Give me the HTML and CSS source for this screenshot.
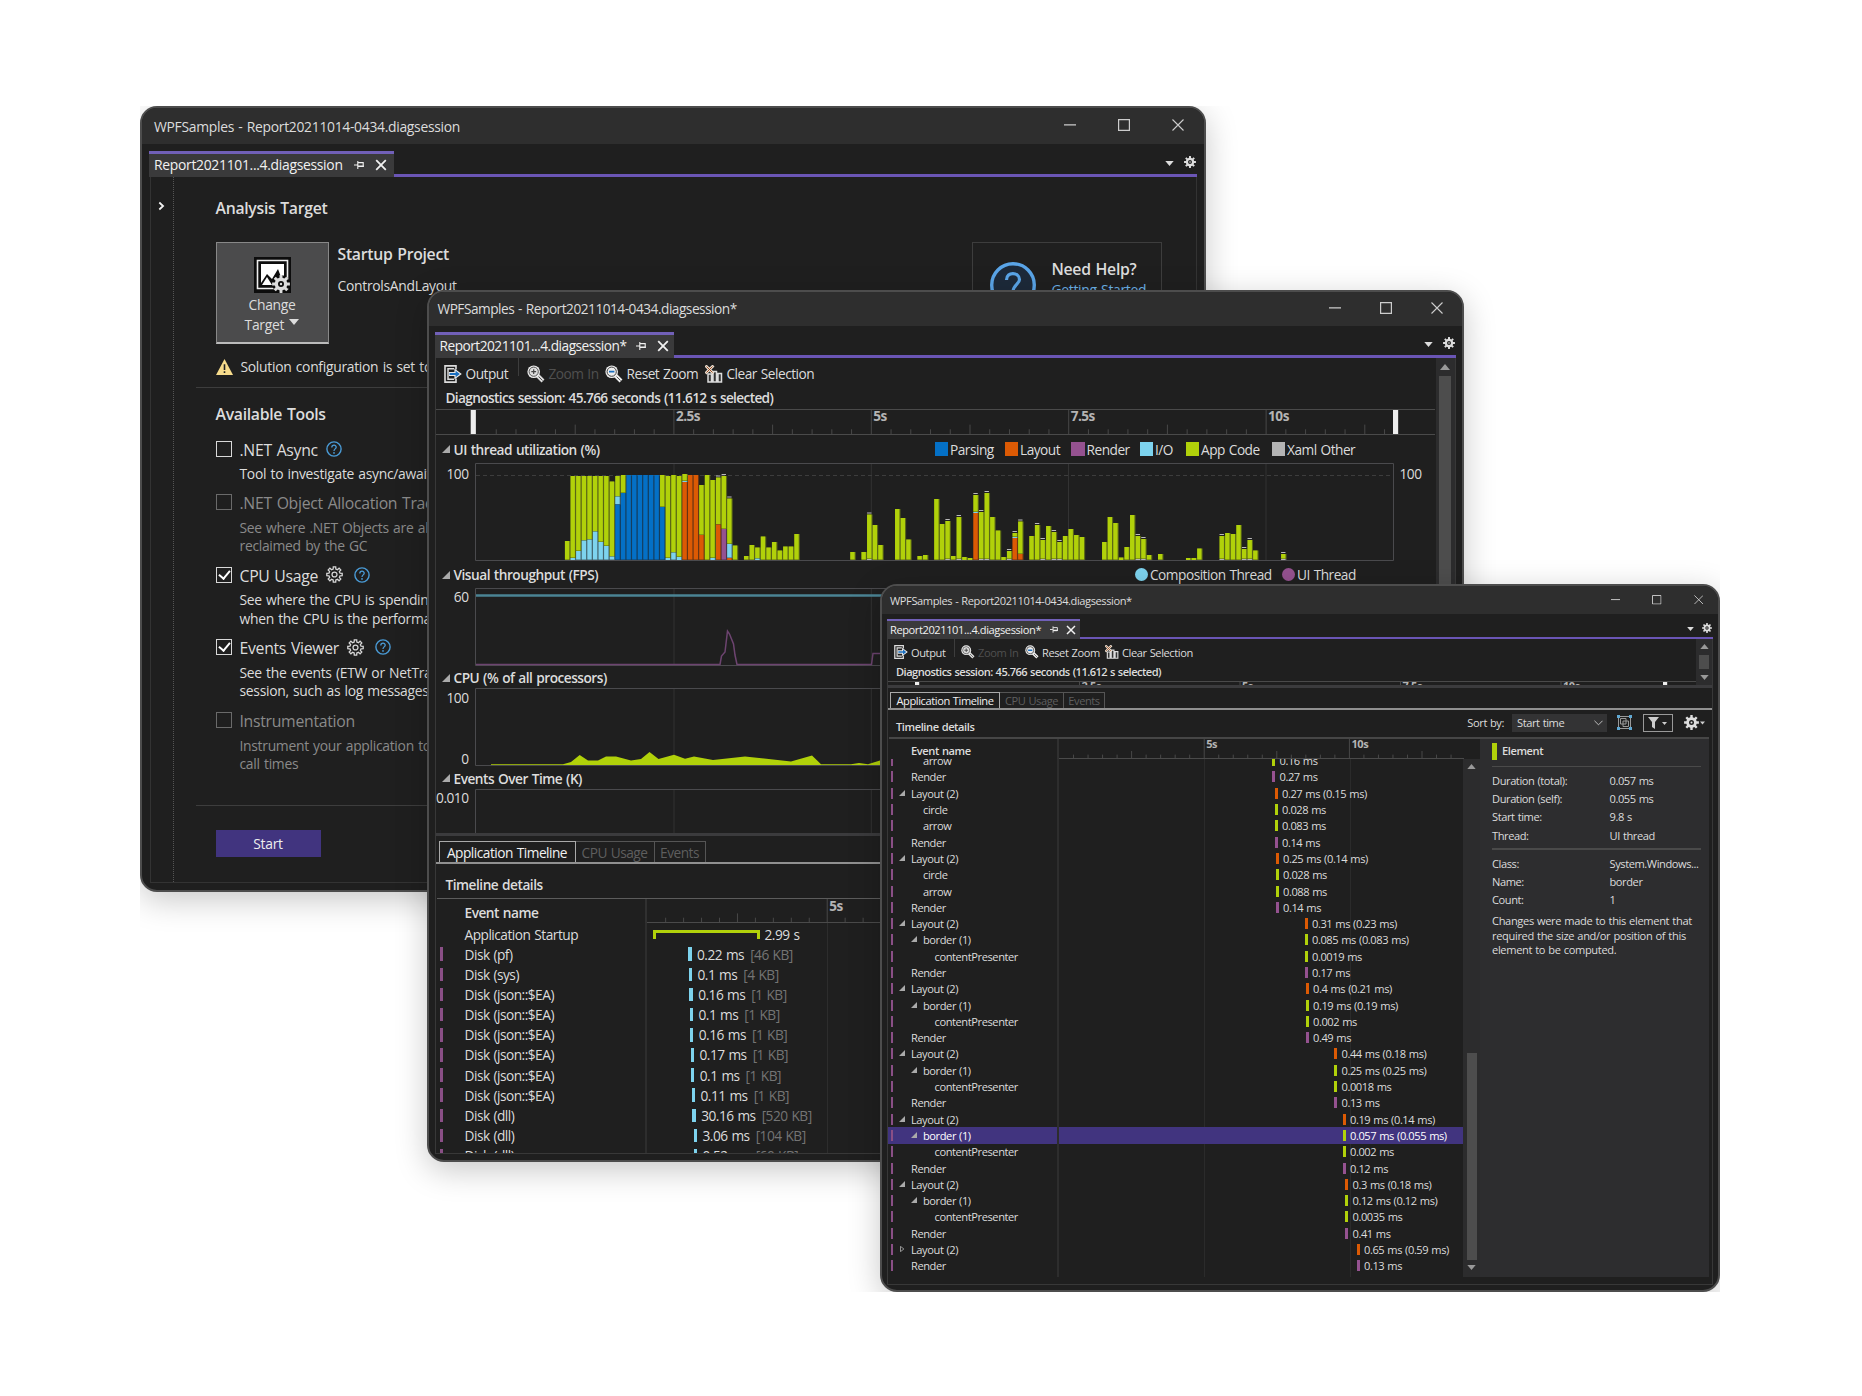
FILE: index.html
```
<!DOCTYPE html>
<html lang="en">
<head>
    <meta charset="UTF-8">
    <meta name="viewport" content="width=device-width, initial-scale=1.0">
    <title>WPFSamples - Diagnostics</title>
    <link rel="stylesheet" href="styles.css">
</head>
<body>
    <svg class="defs" width="0" height="0">
        <symbol id="i-min" viewBox="0 0 12 12"><path d="M0 5.8H12" stroke="#ccc" stroke-width="1.2" /></symbol>
        <symbol id="i-max" viewBox="0 0 12 12"><path d="M.6 .6H11.4V11.4H.6Z" fill="none" stroke="#ccc" stroke-width="1.2" /></symbol>
        <symbol id="i-close" viewBox="0 0 12 12"><path d="M.5 .5L11.5 11.5M11.5 .5L.5 11.5" stroke="#ccc" stroke-width="1.1" /></symbol>
        <symbol id="i-x" viewBox="0 0 12 12"><path d="M1.2 1.2L10.8 10.8M10.8 1.2L1.2 10.8" stroke="#f1f1f1" stroke-width="1.8" /></symbol>
        <symbol id="i-pin" viewBox="0 0 10 8"><path d="M0 4H3.5M3.8 0V8M4 1.6H9.2V5.5H4" fill="none" stroke="#f1f1f1" stroke-width="1.1" /><path d="M4 5.2H9.7" stroke="#f1f1f1" stroke-width="1.6" /></symbol>
        <symbol id="i-down" viewBox="0 0 10 6"><path d="M0 0H10L5 6Z" fill="#ddd" /></symbol>
        <symbol id="i-scroll-up" viewBox="0 0 10 6"><path d="M0 6H10L5 0Z" fill="#999" /></symbol>
        <symbol id="i-scroll-down" viewBox="0 0 10 6"><path d="M0 0H10L5 6Z" fill="#999" /></symbol>
        <symbol id="i-gear" viewBox="0 0 24 24"><path class="gear-path" fill="#ddd" fill-rule="evenodd" /><circle cx="12" cy="12" r="1.6" fill="#ddd" /></symbol>
        <symbol id="i-gear-line" viewBox="0 0 24 24"><path class="gear-path-line" fill="none" stroke="#d8d8d8" stroke-width="1.8" /></symbol>
        <symbol id="i-help" viewBox="0 0 16 16"><circle cx="8" cy="8" r="7.1" fill="none" stroke="#4a9bd6" stroke-width="1.4" /><path d="M5.8 6.4C5.8 3.4 10.3 3.5 10.2 6.2C10.2 7.8 8 8 8 9.9" fill="none" stroke="#4a9bd6" stroke-width="1.3" /><circle cx="8" cy="11.9" r=".9" fill="#4a9bd6" /></symbol>
        <symbol id="i-output" viewBox="0 0 18 18"><path d="M12 4.500V.9H1V17.100H12V13.500" fill="none" stroke="#ddd" stroke-width="1.6" /><path d="M10 3.800H4V14.200H10" fill="none" stroke="#ddd" stroke-width="1.5" /><path d="M5 6.900H10.400V3.400L17.800 9L10.400 14.600V11.100H5Z" fill="#e8e8e8" /><path d="M5.600 8H11.600V5.800L15.800 9L11.600 12.200V10H5.600Z" fill="#1a6fc0" /></symbol>
        <symbol id="i-zoom-in" viewBox="0 0 18 18"><path d="M10 10L16 16" stroke="#ddd" stroke-width="4" /><path d="M11.5 11.5L15.5 15.5" stroke="#555" stroke-width="1" /><circle cx="6.7" cy="6.7" r="6.3" fill="#eee" /><circle cx="6.7" cy="6.7" r="4.6" fill="#ddd" stroke="#555" stroke-width="1" /><path d="M6.7 4.3V9.1M4.3 6.7H9.1" stroke="#444" stroke-width="1.2" /></symbol>
        <symbol id="i-zoom-out" viewBox="0 0 18 18"><path d="M10 10L16 16" stroke="#eee" stroke-width="4" /><path d="M11.5 11.5L15.5 15.5" stroke="#555" stroke-width="1" /><circle cx="6.7" cy="6.7" r="6.3" fill="#eee" /><circle cx="6.7" cy="6.7" r="4.6" fill="#eee" stroke="#444" stroke-width="1" /><path d="M4 6.7H9.4" stroke="#1a6fc0" stroke-width="1.8" /></symbol>
        <symbol id="i-clear" viewBox="0 0 18 18"><path d="M3 9H6.500V17H3ZM8 6.500H11.500V17H8ZM13 8.500H16.500V17H13Z" fill="#333" stroke="#ddd" stroke-width="1.5" /><path d="M.5 .5L8.5 8.5M8.5 .5L.5 8.5" stroke="#e8ddd0" stroke-width="2.8" /><path d="M1.5 1.5L7.5 7.5M7.5 1.5L1.5 7.5" stroke="#9a4a20" stroke-width="1" /></symbol>
        <symbol id="i-open" viewBox="0 0 8 8"><path d="M8 0V8H0Z" fill="#aaa" /></symbol>
        <symbol id="i-shut" viewBox="0 0 8 8"><path d="M2 .5V7.5L6.5 4Z" fill="none" stroke="#bbb" stroke-width="1" /></symbol>
    </svg>

    <div class="scene">
        <!-- launch page -->
        <div class="window win-launch">
            <div class="titlebar">
                <span class="caption">WPFSamples - Report20211014-0434.diagsession</span>
                <span class="controls"><svg><use href="#i-min" /></svg><svg><use href="#i-max" /></svg><svg><use href="#i-close" /></svg></span>
            </div>
            <div class="tabstrip">
                <div class="doc-tab"><span>Report2021101...4.diagsession</span><svg class="pin"><use href="#i-pin" /></svg><svg class="x"><use href="#i-x" /></svg></div>
                <div class="tab-rest"><svg class="drop"><use href="#i-down" /></svg><svg class="cog"><use href="#i-gear" /></svg></div>
            </div>
            <div class="launch">
                <div class="rail"><svg viewBox="0 0 8 10" width="7" height="10"><path d="M1.5 1L5.8 5L1.5 9" fill="none" stroke="#f1f1f1" stroke-width="2" /></svg></div>
                <div class="launch-main">
                    <h2 class="analysis">Analysis Target</h2>
                    <div class="target">
                        <div class="change">
                            <svg viewBox="0 0 37 36" width="37" height="36">
                                <path d="M0 0H37V36H0Z" fill="#0d0d0d" /><path d="M3.5 3.5H33.5V31.5H3.5Z" fill="#0d0d0d" stroke="#eee" stroke-width="1.6" />
                                <path d="M7 7H30V20H27L24 12L18 22L13 17L7 26Z" fill="#fff" /><path d="M8 28L13 20L18 28Z" fill="#fff" />
                                <circle cx="27" cy="27" r="9" fill="#0d0d0d" /><svg x="18" y="18" width="18" height="18"><use href="#i-gear" /></svg>
                            </svg>
                            <span>Change</span>
                            <span>Target <i class="caret"></i></span>
                        </div>
                        <div class="startup"><b>Startup Project</b><span>ControlsAndLayout</span></div>
                        <div class="help-box">
                            <svg viewBox="0 0 46 46" width="46" height="46"><circle cx="23" cy="23" r="21.3" fill="#1d2a3a" stroke="#5aa5e8" stroke-width="3.4" /><path d="M16.5 18C16.5 9 29.5 10 29.5 17.5C29.5 22 23 23 23 29.5" fill="none" stroke="#5aa5e8" stroke-width="3.2" /><circle cx="23" cy="35" r="2.2" fill="#5aa5e8" /></svg>
                            <div class="help-text"><b>Need Help?</b><a>Getting Started</a></div>
                        </div>
                    </div>
                    <div class="warning">
                        <svg viewBox="0 0 16 15" width="17" height="16"><path d="M8 0L16 15H0Z" fill="#f7dc8c" /><path d="M8 5V10.4M8 11.6V13.2" stroke="#222" stroke-width="1.5" /></svg>
                        <span>Solution configuration is set to Debug.</span>
                    </div>
                    <h2 class="available">Available Tools</h2>
                    <div class="option">
                        <label><i class="box"></i>.NET Async <svg><use href="#i-help" /></svg></label>
                        <p>Tool to investigate async/await usage</p>
                    </div>
                    <div class="option off two">
                        <label><i class="box"></i>.NET Object Allocation Tracking</label>
                        <p>See where .NET Objects are allocated<br>reclaimed by the GC</p>
                    </div>
                    <div class="option two">
                        <label><i class="box on"></i>CPU Usage <svg class="wide"><use href="#i-gear-line" /></svg><svg><use href="#i-help" /></svg></label>
                        <p>See where the CPU is spending time<br>when the CPU is the performance</p>
                    </div>
                    <div class="option two">
                        <label><i class="box on"></i>Events Viewer <svg class="wide"><use href="#i-gear-line" /></svg><svg><use href="#i-help" /></svg></label>
                        <p>See the events (ETW or NetTrace)<br>session, such as log messages, and</p>
                    </div>
                    <div class="option off two">
                        <label><i class="box"></i>Instrumentation</label>
                        <p>Instrument your application to see<br>call times</p>
                    </div>
                    <div class="start-row"><button class="start">Start</button></div>
                </div>
            </div>
        </div>

        <!-- report graphs -->
        <div class="window win-report">
            <div class="titlebar">
                <span class="caption">WPFSamples - Report20211014-0434.diagsession*</span>
                <span class="controls"><svg><use href="#i-min" /></svg><svg><use href="#i-max" /></svg><svg><use href="#i-close" /></svg></span>
            </div>
            <div class="tabstrip">
                <div class="doc-tab"><span>Report2021101...4.diagsession*</span><svg class="pin"><use href="#i-pin" /></svg><svg class="x"><use href="#i-x" /></svg></div>
                <div class="tab-rest"><svg class="drop"><use href="#i-down" /></svg><svg class="cog"><use href="#i-gear" /></svg></div>
            </div>
            <div class="report">
                <div class="upper">
                    <div class="graphs">
                        <div class="toolbar">
                            <span><svg><use href="#i-output" /></svg>Output</span><i></i>
                            <span class="off"><svg><use href="#i-zoom-in" /></svg>Zoom In</span>
                            <span><svg><use href="#i-zoom-out" /></svg>Reset Zoom</span>
                            <span><svg><use href="#i-clear" /></svg>Clear Selection</span>
                        </div>
                        <div class="session">Diagnostics session: 45.766 seconds (11.612 s selected)</div>
                        <svg class="ruler" id="ruler-main" width="999" height="26"></svg>
                        <div class="graph-head h1">
                            <svg><use href="#i-open" /></svg><b>UI thread utilization (%)</b>
                            <div class="legend">
                                <span><i class="parsing"></i>Parsing</span><span><i class="layout"></i>Layout</span><span><i class="render"></i>Render</span>
                                <span><i class="io"></i>I/O</span><span><i class="code"></i>App Code</span><span><i class="other"></i>Xaml Other</span>
                            </div>
                        </div>
                        <div class="graph g1"><div class="axis"><span>100</span></div><svg id="utilization" width="919" height="98"></svg><div class="axis-right">100</div></div>
                        <div class="graph-head h2">
                            <svg><use href="#i-open" /></svg><b>Visual throughput (FPS)</b>
                            <div class="legend dots"><span><i class="io"></i>Composition Thread</span><span><i class="render"></i>UI Thread</span></div>
                        </div>
                        <div class="graph g2"><div class="axis"><span>60</span></div>
                            <svg width="919" height="78">
                                <path d="M199 0V78M396.3 0V78" stroke="#333" />
                                <path d="M.5 77.5V.5H918.5V77.5Z" fill="none" stroke="#4a4a4d" />
                                <path d="M1 7.5H918" stroke="#4b8494" stroke-width="2.4" />
                                <path d="M1 76.5H245L246.5 68L250 64L252.5 43L254.5 46L258.5 56L260 67L262 76.5H396.5L398 65.5H408" fill="none" stroke="#6d4470" stroke-width="1.5" />
                            </svg>
                        </div>
                        <div class="graph-head h3"><svg><use href="#i-open" /></svg><b>CPU (% of all processors)</b></div>
                        <div class="graph g3"><div class="axis"><span>100</span><span>0</span></div>
                            <svg width="919" height="78">
                                <path d="M199 0V78M396.3 0V78" stroke="#333" />
                                <path d="M.5 77.5V.5H918.5V77.5Z" fill="none" stroke="#4a4a4d" />
                                <path d="M16 77V76.3H88L96 74L104.7 67L113 72.5H123L131 68.5H141L156 72.5L166 71L174.5 64L183.5 71L199 66.8L210 70.8L219 68.5L238 72L270 68.5L316 73.5L337 67.5L346 76.2H376L384 75L393 76.2L405 72.5L419 70V77Z" fill="#b1d10a" />
                            </svg>
                        </div>
                        <div class="graph-head h4"><svg><use href="#i-open" /></svg><b>Events Over Time (K)</b></div>
                        <div class="graph g4"><div class="axis"><span>0.010</span></div>
                            <svg width="919" height="78"><path d="M199 0V78M396.3 0V78" stroke="#333" /><path d="M.5 77.5V.5H918.5V77.5Z" fill="none" stroke="#4a4a4d" /></svg>
                        </div>
                    </div>
                    <div class="scroll"><svg><use href="#i-scroll-up" /></svg><i class="thumb"></i></div>
                </div>
                <div class="view-tabs"><span class="on">Application Timeline</span><span>CPU Usage</span><span>Events</span></div>
                <div class="details-head"><b>Timeline details</b></div>
                <div class="event-head"><b>Event name</b><svg class="ruler" id="ruler-report" width="400" height="24"></svg></div>
                <div class="events" id="events-report"></div>
            </div>
        </div>

        <!-- timeline details -->
        <div class="window win-details">
            <div class="titlebar">
                <span class="caption">WPFSamples - Report20211014-0434.diagsession*</span>
                <span class="controls"><svg><use href="#i-min" /></svg><svg><use href="#i-max" /></svg><svg><use href="#i-close" /></svg></span>
            </div>
            <div class="tabstrip">
                <div class="doc-tab"><span>Report2021101...4.diagsession*</span><svg class="pin"><use href="#i-pin" /></svg><svg class="x"><use href="#i-x" /></svg></div>
                <div class="tab-rest"><svg class="drop"><use href="#i-down" /></svg><svg class="cog"><use href="#i-gear" /></svg></div>
            </div>
            <div class="report">
                <div class="upper">
                    <div class="graphs">
                        <div class="toolbar">
                            <span><svg><use href="#i-output" /></svg>Output</span><i></i>
                            <span class="off"><svg><use href="#i-zoom-in" /></svg>Zoom In</span>
                            <span><svg><use href="#i-zoom-out" /></svg>Reset Zoom</span>
                            <span><svg><use href="#i-clear" /></svg>Clear Selection</span>
                        </div>
                        <div class="session">Diagnostics session: 45.766 seconds (11.612 s selected)</div>
                        <svg class="ruler" id="ruler-strip" width="808" height="22"></svg>
                    </div>
                    <div class="scroll"><svg><use href="#i-scroll-up" /></svg><i class="thumb"></i><svg><use href="#i-scroll-down" /></svg></div>
                </div>
                <div class="view-tabs"><span class="on">Application Timeline</span><span>CPU Usage</span><span>Events</span></div>
                <div class="details-head">
                    <b>Timeline details</b>
                    <div class="sort">
                        <span>Sort by:</span>
                        <div class="select">Start time<svg viewBox="0 0 10 6" width="9" height="6"><path d="M.5 .5L5 5L9.5 .5" fill="none" stroke="#ccc" /></svg></div>
                        <svg viewBox="0 0 15 15" width="15" height="15"><path d="M2 1.5H13M2 13.5H13M1.5 2V13M13.5 2V13M3.5 3.5H9V9H3.5ZM6 6H11.5V11.5H6Z" fill="none" stroke="#999" /><path d="M0 0H3V3H0ZM12 0H15V3H12ZM0 12H3V15H0ZM12 12H15V15H12Z" fill="#5fa8d3" /></svg>
                        <div class="filter"><svg viewBox="0 0 20 12" width="20" height="12"><path d="M0 0H11L7 5V12L4 10V5Z" fill="#ccc" /><path d="M14 5H19L16.5 8Z" fill="#ccc" /></svg></div>
                        <svg viewBox="0 0 21 15" width="21" height="15"><svg width="15" height="15"><use href="#i-gear" /></svg><path d="M16 6.5H21L18.5 9.5Z" fill="#ccc" /></svg>
                    </div>
                </div>
                <div class="split">
                    <div class="timeline">
                        <div class="event-head"><b>Event name</b><svg class="ruler" id="ruler-details" width="405" height="20"></svg></div>
                        <div class="event-scroll">
                            <div class="events" id="events-details"></div>
                            <div class="scroll"><svg><use href="#i-scroll-up" /></svg><i class="thumb"></i><svg><use href="#i-scroll-down" /></svg></div>
                        </div>
                    </div>
                    <div class="element">
                        <h3>Element</h3>
                        <dl><dt>Duration (total):</dt><dd>0.057 ms</dd><dt>Duration (self):</dt><dd>0.055 ms</dd><dt>Start time:</dt><dd>9.8 s</dd><dt>Thread:</dt><dd>UI thread</dd></dl>
                        <dl class="second"><dt>Class:</dt><dd>System.Windows...</dd><dt>Name:</dt><dd>border</dd><dt>Count:</dt><dd>1</dd></dl>
                        <p>Changes were made to this element that<br>required the size and/or position of this<br>element to be computed.</p>
                    </div>
                </div>
            </div>
        </div>
    </div>
    <script src="script.js"></script>
</body>
</html>
```

FILE: styles.css
```
* {
    box-sizing: border-box;
}
body {
    margin: 0;
    background: #fff;
    font-family: "Open Sans", "Noto Sans", sans-serif;
    color: #dcdcdc;
    white-space: nowrap;
}
h2, h3, p, dl, dd {
    margin: 0;
}
b, h2, h3 {
    font-weight: 600;
}
svg {
    display: block;
    flex: none;
}
.defs {
    position: absolute;
}
.scene {
    position: relative;
    width: 1580px;
    height: 1186px;
    margin: 106px 0 0 140px;
    overflow: hidden;
}

/* windows */
.window {
    position: absolute;
    display: flex;
    flex-direction: column;
    overflow: hidden;
    background: #1f1f1f;
    border: 2px solid #4d4d4d;
    border-radius: 17px;
    box-shadow: 0 8px 32px rgba(0, 0, 0, 0.22);
}
.win-launch {
    left: 0;
    top: 0;
    width: 1065.5px;
    height: 786px;
    font-size: 13.9px;
    letter-spacing: -0.3px;
    word-spacing: 1px;
}
.win-report {
    left: 286.5px;
    top: 184px;
    width: 1037px;
    height: 872px;
    font-size: 13.7px;
    letter-spacing: -0.5px;
    word-spacing: 0.8px;
}
.win-details {
    left: 740px;
    top: 478px;
    width: 840px;
    height: 708px;
    font-size: 11.1px;
    letter-spacing: -0.42px;
    word-spacing: 0.6px;
}
.titlebar {
    display: flex;
    align-items: center;
    justify-content: space-between;
    flex: none;
    height: 36px;
    padding: 4px 20px 0 12px;
    background: #2e2e2e;
}
.caption {
    margin-top: -4px;
}
.win-report .titlebar {
    height: 34px;
    padding: 3px 19px 0 9px;
}
.win-details .titlebar {
    height: 28px;
    padding: 3px 15px 0 8px;
}
.win-details .caption {
    margin-top: -2px;
}
.controls {
    display: flex;
    gap: 42px;
    margin-top: -6px;
}
.win-report .controls {
    gap: 39px;
}
.win-details .controls {
    gap: 32px;
    margin-top: -3px;
}
.controls svg {
    width: 12px;
    height: 12px;
}
.win-details .controls svg {
    width: 9.5px;
    height: 9.5px;
}
.tabstrip {
    display: flex;
    flex: none;
    height: 33px;
    padding: 7px 7px 0;
}
.win-report .tabstrip {
    height: 32px;
    padding: 6px 6px 0;
}
.win-details .tabstrip {
    height: 25px;
    padding: 5px 5px 0;
}
.doc-tab {
    display: flex;
    align-items: center;
    width: 244.5px;
    padding: 0 0 1px 5px;
    background: #3a3a3b;
    border-top: 3px solid #7160b8;
    color: #f1f1f1;
}
.win-report .doc-tab {
    width: 239px;
}
.win-details .doc-tab {
    width: 193px;
    padding-left: 3px;
    border-top-width: 2px;
}
.doc-tab span {
    width: 200px;
    margin-top: -1px;
}
.win-report .doc-tab span {
    width: 196px;
}
.win-details .doc-tab span {
    width: 159.5px;
}
.pin {
    width: 10px;
    height: 8px;
}
.x {
    width: 12px;
    height: 12px;
    margin-left: 11px;
}
.win-details .pin {
    width: 8px;
    height: 7px;
}
.win-details .x {
    width: 10px;
    height: 10px;
    margin-left: 8px;
}
.tab-rest {
    display: flex;
    flex: 1;
    justify-content: flex-end;
    align-items: center;
    padding: 0 1px 1px 0;
    border-bottom: 3px solid #6a55b5;
}
.win-details .tab-rest {
    border-bottom-width: 2px;
    padding: 0 1px 1px 0;
}
.drop {
    width: 9px;
    height: 5px;
    margin: 3px 10px 0 0;
}
.cog {
    width: 12px;
    height: 12px;
}
.win-details .drop {
    width: 7px;
    height: 4px;
    margin-right: 8px;
}
.win-details .cog {
    width: 10px;
    height: 10px;
}

/* launch page */
.launch {
    display: flex;
    flex: 1;
    margin: 0 7px 7px 8px;
    border: 1px solid #333;
    border-top: none;
}
.rail {
    width: 24px;
    padding: 24px 0 0 7px;
    border-right: 1px dotted #555;
}
.launch-main {
    flex: 1;
    padding-left: 22px;
}
.launch-main h2 {
    padding-left: 20px;
    font-size: 15.8px;
    line-height: 22px;
}
.analysis {
    margin-top: 20px;
}
.target {
    display: flex;
    height: 102px;
    margin: 23px 34px 0 20px;
}
.change {
    display: flex;
    flex-direction: column;
    align-items: center;
    width: 113px;
    padding-top: 14px;
    background: #4b4b4c;
    border: 1px solid #888;
    border-bottom: 2px solid #bbb;
    line-height: 20px;
}
.change svg {
    margin-bottom: 2px;
}
.caret {
    display: inline-block;
    margin: 0 0 5px 1px;
    border: 5px solid transparent;
    border-top: 6px solid #ddd;
    border-bottom: 0;
}
.startup {
    display: flex;
    flex-direction: column;
    width: 643px;
    padding: 1px 0 0 9px;
}
.startup b, .help-text b {
    font-size: 15.8px;
    line-height: 22px;
}
.startup span {
    margin-top: 11px;
}
.help-box {
    display: flex;
    width: 190px;
    height: 140px;
    padding: 19px 0 0 17px;
    border: 1px solid #3d3d3d;
}
.help-text {
    display: flex;
    flex-direction: column;
    padding-left: 16px;
    margin-top: -4px;
}
.help-text a {
    color: #6cb2e8;
}
.warning {
    display: flex;
    align-items: center;
    gap: 8px;
    height: 44px;
    padding: 2px 0 0 20px;
    border-bottom: 1px solid #3d3d3d;
}
.warning span {
    margin-top: -1px;
}
.available {
    margin: 15px 0 16px;
}
.option {
    height: 53.5px;
    padding-left: 20px;
}
.option.two {
    height: 72.7px;
}
.option label {
    display: flex;
    align-items: center;
    height: 16px;
    font-size: 15.8px;
    line-height: 18px;
    padding-top: 1px;
}
.option p {
    margin: 7px 0 0 24px;
    line-height: 18.5px;
    padding-top: 1px;
}
.option svg {
    width: 16px;
    height: 16px;
    margin: -2px 0 0 8px;
}
.option .wide {
    width: 17px;
    height: 17px;
    margin-right: 3px;
}
.option.off {
    color: #8a8a8a;
}
.box {
    width: 16px;
    height: 16px;
    margin: -2px 8px 0 0;
    border: 1.5px solid #d8d8d8;
}
.off .box {
    border-color: #6a6a6a;
}
.box.on::after {
    content: "";
    display: block;
    width: 5px;
    height: 9px;
    margin: 0 0 0 4px;
    border: solid #fff;
    border-width: 0 2px 2px 0;
    transform: rotate(40deg);
}
.start-row {
    margin-top: 20px;
    padding: 24px 0 0 20px;
    border-top: 1px solid #3d3d3d;
}
.start {
    display: block;
    width: 105px;
    height: 27px;
    padding: 0;
    background: #41347f;
    border: none;
    color: #eee;
    font: inherit;
    letter-spacing: inherit;
}

/* report */
.report {
    display: flex;
    flex: 1;
    flex-direction: column;
    min-height: 0;
    margin: 0 6px 6px;
    border: 1px solid #383838;
    border-top: none;
    overflow: hidden;
}
.win-details .report {
    margin: 0 5px 5px;
}
.upper {
    display: flex;
    flex: none;
    height: 478px;
    overflow: hidden;
    border-bottom: 3px solid #3b3b3d;
}
.win-details .upper {
    height: 49px;
}
.graphs {
    flex: 1;
}
.toolbar {
    display: grid;
    grid-template-columns: 74px 9px 78px 100px auto;
    height: 31px;
    padding-left: 8px;
}
.toolbar span {
    display: flex;
    align-items: center;
    gap: 4px;
}
.toolbar svg {
    width: 18px;
    height: 18px;
}
.toolbar i {
    height: 18px;
    border-left: 1px solid #3d3d3d;
}
.toolbar .off {
    color: #505050;
}
.session {
    height: 20px;
    padding-left: 10px;
    font-weight: 600;
    line-height: 17px;
    letter-spacing: -0.66px;
}
.win-details .toolbar {
    grid-template-columns: 60px 7px 64px 80px auto;
    height: 26px;
    padding-left: 6px;
}
.win-details .toolbar span {
    gap: 3px;
}
.win-details .toolbar svg {
    width: 14px;
    height: 14px;
}
.win-details .session {
    height: 16px;
    padding-left: 8px;
    line-height: 14px;
    letter-spacing: -0.54px;
}
.ruler text {
    fill: #b4b4b4;
    font-weight: 700;
}
.graph-head {
    display: flex;
    align-items: center;
    padding-left: 6px;
}
.graph-head > svg {
    width: 8px;
    height: 8px;
    margin-right: 4px;
}
.h1 {
    height: 28px;
}
.h2 {
    height: 27px;
}
.h3 {
    height: 22px;
    padding-top: 1px;
}
.h4 {
    height: 23px;
    padding-top: 1px;
}
.legend {
    display: grid;
    grid-template-columns: 70px 66.5px 68.5px 46px 86px auto;
    margin-left: auto;
    width: 501px;
}
.legend.dots {
    grid-template-columns: 147px auto;
    width: 301px;
}
.legend span {
    display: flex;
    align-items: center;
    gap: 2px;
}
.legend i {
    width: 13.5px;
    height: 13.5px;
}
.dots i {
    border-radius: 50%;
}
.parsing { background: #0470c6; }
.layout { background: #dc5a04; }
.render { background: #955290; }
.io { background: #7dd3ee; }
.code { background: #b1d10a; }
.other { background: #b4b4b4; }
.graph {
    display: grid;
    grid-template-columns: 39px 919px auto;
}
.axis {
    display: flex;
    flex-direction: column;
    justify-content: space-between;
    align-items: flex-end;
    padding: 2px 6px 0 0;
    line-height: 18px;
}
.g2 .axis {
    padding-top: 0;
}
.g3 .axis {
    padding-top: 1px;
    margin-bottom: -2px;
}
.g4 .axis {
    padding-top: 0;
}
.axis-right {
    padding: 2px 0 0 6px;
    line-height: 18px;
}
.scroll {
    display: flex;
    flex-direction: column;
    align-items: center;
    width: 19px;
    padding-top: 6px;
    background: #2c2c2d;
}
.scroll svg {
    width: 12px;
    height: 6px;
}
.thumb {
    width: 12px;
    flex: 1;
    margin-top: 6px;
    background: #4d4d4d;
}
.win-details .scroll {
    width: 17px;
    padding: 5px 0;
}
.win-details .scroll svg {
    width: 9px;
    height: 5px;
}
.win-details .upper .thumb {
    width: 10px;
    margin: 6px 0;
}
.view-tabs {
    display: flex;
    flex: none;
    height: 28px;
    padding: 5px 0 0 3px;
    border-bottom: 2px solid #909090;
}
.view-tabs span {
    display: flex;
    align-items: center;
    justify-content: center;
    width: 79px;
    border: 1px solid #555;
    border-width: 1.5px 1.5px 0 0;
    color: #5e5e5e;
}
.view-tabs .on {
    width: 137px;
    border-left: 1px solid #aaa;
    border-color: #aaa;
    color: #f1f1f1;
}
.view-tabs span:last-child {
    width: 51px;
}
.win-details .view-tabs {
    height: 22px;
    padding: 4px 0 0 2px;
}
.win-details .view-tabs span {
    width: 64px;
}
.win-details .view-tabs .on {
    width: 110px;
}
.win-details .view-tabs span:last-child {
    width: 41px;
}
.details-head {
    display: flex;
    flex: none;
    align-items: center;
    height: 35px;
    margin-left: 1px;
    padding: 7px 0 0 9px;
    border-bottom: 1px solid #5c5c5c;
}
.win-details .details-head {
    height: 29px;
    margin-right: 3px;
    padding: 5px 0 0 7px;
    border-bottom: 2px solid #464646;
}

/* event list */
.event-head {
    display: flex;
    flex: none;
    height: 24px;
}
.event-head b {
    width: 211px;
    padding: 4px 0 0 29px;
    border-right: 2px solid #303030;
}
.events {
    flex: 1;
    overflow: hidden;
    min-height: 0;
    background: linear-gradient(#2d2d2d, #2d2d2d) 209px 0 / 2px 100% no-repeat, linear-gradient(#2d2d2d, #2d2d2d) 391px 0 / 1px 100% no-repeat;
}
.win-report .events {
    padding-top: 1px;
}
.event {
    display: grid;
    grid-template-columns: 209px 2px 1fr;
    height: 20.15px;
}
.event .name {
    display: flex;
    align-items: center;
    padding-left: 4px;
}
.event .name::before {
    content: "";
    width: 3px;
    height: 13.5px;
    margin-right: 22px;
    background: #8a4f86;
}
.event .name.plain::before {
    background: none;
}
.event .when {
    grid-column: 3;
    display: flex;
    align-items: center;
}
.mark {
    width: 3.5px;
    height: 13.5px;
    margin-right: 5.5px;
}
.event em {
    margin-left: 6px;
    font-style: normal;
    color: #747474;
}
.bracket {
    width: 107px;
    height: 9px;
    margin-right: 5px;
    border: solid #b1d10a;
    border-width: 3px 3px 0;
}
.win-details .event-head {
    height: 20px;
}
.win-details .event-head b {
    width: 171px;
    padding: 4px 0 0 23px;
}
.split {
    display: flex;
    flex: 1;
    min-height: 0;
    margin: 0 3px 7px 0;
}
.timeline {
    display: flex;
    flex: 1;
    flex-direction: column;
}
.event-scroll {
    display: flex;
    flex: 1;
    min-height: 0;
}
.win-details .events {
    background: linear-gradient(#2d2d2d, #2d2d2d) 169px 0 / 2px 100% no-repeat, linear-gradient(#2b2b2b, #2b2b2b) 316px 0 / 1px 100% no-repeat, linear-gradient(#2b2b2b, #2b2b2b) 461.5px 0 / 1px 100% no-repeat;
}
.win-details .event {
    grid-template-columns: 169px 2px 1fr;
    height: 16.31px;
}
.win-details .event:first-child {
    margin-top: -6.5px;
}
.win-details .event .name {
    padding-left: 3px;
}
.win-details .event .name::before {
    width: 2px;
    height: 11px;
    margin-right: 6px;
}
.event .twist {
    width: 6px;
    height: 6px;
    margin: -1px 6px 0 0;
}
.level-1 .twist {
    margin-left: 12px;
}
.level-2 .twist {
    margin-left: 23.5px;
}
.win-details .mark {
    width: 3px;
    height: 11px;
    margin-right: 4.5px;
}
.selected .name, .selected .when {
    background: #41347f;
    color: #fff;
}
.event-scroll .thumb {
    flex: none;
    width: 10px;
    height: 207px;
    margin: 284px 0 5px;
}

/* sort bar and element panel */
.sort {
    display: flex;
    align-items: center;
    margin: -7px 4px 0 auto;
}
.select {
    display: flex;
    align-items: center;
    justify-content: space-between;
    width: 95px;
    height: 18px;
    margin: 0 10px 0 8px;
    padding: 0 4px 0 5px;
    background: #333334;
}
.filter {
    width: 30px;
    height: 18px;
    margin: 0 11px;
    padding: 2px 4px;
    border: 1px solid #999;
}
.element {
    width: 229px;
    padding: 4px 8px 0 12px;
    background: #2d2d2f;
}
.element h3 {
    height: 17px;
    padding-left: 5px;
    border-left: 5px solid #b1d10a;
    font-size: 11.1px;
    line-height: 16px;
}
.element dl {
    display: grid;
    grid-template-columns: 117.5px auto;
    margin-top: 6px;
    padding: 5px 0 4px;
    border-top: 1px solid #4a4a4a;
    line-height: 18.2px;
}
.element .second {
    margin: -1px 0 0;
    border-top-width: 2px;
}
.element p {
    margin-top: 1px;
    line-height: 14.5px;
    letter-spacing: -0.35px;
}
```

FILE: script.js
```
const SVG = "http://www.w3.org/2000/svg";
const colors = { parsing: "#0470c6", layout: "#dc5a04", render: "#955290", io: "#7dd3ee", code: "#b1d10a", other: "#b4b4b4" };

function add(parent, tag, attrs, text) {
    const el = document.createElementNS(SVG, tag);
    for (const key in attrs) el.setAttribute(key, attrs[key]);
    if (text) el.textContent = text;
    parent.appendChild(el);
}

function gear(outer, inner, hole) {
    let d = "";
    for (let i = 0; i < 8; i++) {
        [[-0.3, inner], [-0.2, outer], [0.2, outer], [0.3, inner]].forEach(([off, r]) => {
            const a = (i + off) * Math.PI / 4;
            d += (d ? "L" : "M") + (12 + r * Math.sin(a)).toFixed(2) + " " + (12 - r * Math.cos(a)).toFixed(2);
        });
    }
    return d + `ZM${12 - hole} 12a${hole} ${hole} 0 1 0 ${hole * 2} 0a${hole} ${hole} 0 1 0 ${-hole * 2} 0Z`;
}
document.querySelector(".gear-path").setAttribute("d", gear(12, 8.5, 4));
document.querySelector(".gear-path-line").setAttribute("d", gear(11, 8, 3.5));

// start = x of 0s, step = px between small ticks, ten ticks per label
function ruler(id, start, step, size, labels, handles) {
    const svg = document.getElementById(id);
    const w = +svg.getAttribute("width"), h = +svg.getAttribute("height");
    for (let i = 1; start + i * step < (handles ? handles[1] - 4 : w); i++) {
        const len = i % 10 === 0 ? h : i % 5 === 0 ? h * 0.4 : h * 0.22;
        add(svg, "rect", { x: start + i * step - 0.5, y: h - len, width: 1, height: len, fill: "#484848" });
        if (i % 10 === 0) add(svg, "text", { x: start + i * step + 2, y: size * 0.85, "font-size": size }, labels[i / 10 - 1]);
    }
    if (handles) {
        add(svg, "rect", { x: 0, y: 0, width: w, height: 1, fill: "#4a4a4a" });
        handles.forEach(x => add(svg, "rect", { x: x, y: 1, width: size * 0.38, height: h - 2, fill: "#eee" }));
    }
    add(svg, "rect", { x: 0, y: h - 1, width: w, height: 1, fill: "#4a4a4a" });
}
ruler("ruler-main", 40.5, 19.74, 13.6, ["2.5s", "5s", "7.5s", "10s"], [34.7, 957]);
ruler("ruler-strip", 31, 16.05, 11, ["2.5s", "5s", "7.5s", "10s"], [27, 775]);
ruler("ruler-report", 0.7, 17.95, 13.6, ["5s", "10s"]);
ruler("ruler-details", 0, 14.52, 11, ["5s", "10s"]);

// [slot, total height, { lower segments }, has cap]
const io = h => ({ io: h });
const slots = [
    [16, 19], [17, 84, io(2)], [18, 84, io(9)], [19, 84, io(19.5)], [20, 84, io(20.5)], [21, 84, io(28.5)], [22, 84, io(18)], [23, 84, io(14)],
    [24, 78.5, io(3.5)], [25, 84, { parsing: 55.5, io: 8 }], [26, 85, { parsing: 67 }],
    [27, 85, { parsing: 85 }], [28, 85, { parsing: 85 }], [29, 85, { parsing: 85 }], [30, 85, { parsing: 85 }], [31, 85, { parsing: 85 }], [32, 85, { parsing: 85 }],
    [33, 85, { parsing: 53 }], [34, 84, io(2)], [35, 85, io(7.5)], [36, 84, io(3)], [37, 86, { layout: 78, io: 1 }],
    [38, 85, { layout: 85 }], [39, 85, { layout: 85 }], [40, 75, { layout: 25 }], [41, 85], [42, 80, io(2)],
    [43, 82.5, { layout: 35.5 }, 1], [44, 84, { render: 31 }, 1], [45, 61.5, { layout: 2, io: 14 }, 1], [46, 14.5],
    [48, 4], [49, 15], [50, 12.5, io(1.5)], [51, 23.5], [52, 12.5], [53, 18], [54, 9.5], [55, 13.5], [56, 13.5], [57, 26],
    [67, 8], [69, 8], [70, 45.5, { other: 1 }, 1], [71, 35], [72, 15], [75, 51], [76, 42], [77, 20.5], [79, 4], [80, 5],
    [82, 61], [83, 36], [84, 39, { other: 1 }, 1], [85, 4], [86, 43, { other: 1 }, 1], [87, 3], [88, 2],
    [89, 65, { layout: 47, io: 1 }, 1], [90, 48, { other: 1 }, 1], [91, 67, { other: 1 }, 1], [92, 43], [93, 29.5], [94, 3],
    [95, 9, { other: 1 }, 1], [96, 27, { layout: 22, io: 1 }, 1], [97, 38.5, { layout: 6 }, 1],
    [99, 24], [100, 35, null, 1], [101, 20, { other: 1 }, 1], [102, 34], [103, 28, { other: 1 }, 1], [104, 18, { other: 1 }, 1], [105, 24], [106, 31], [107, 25], [108, 23],
    [112, 18], [113, 43], [114, 37], [115, 2.5], [116, 13], [117, 45], [118, 24, { other: 1 }, 1], [119, 21, { other: 1 }, 1], [120, 5], [122, 6],
    [127, 2], [128, 2], [129, 11.5], [133, 24, { other: 1 }, 1], [134, 27], [135, 26], [136, 35], [137, 11, { other: 1 }, 1], [138, 20, { other: 1 }, 1], [139, 9.5], [144, 6, { other: 1 }, 1]
];
const chart = document.getElementById("utilization");
[199, 396.3, 593.5, 791].forEach(x => add(chart, "path", { d: `M${x} 0V98`, stroke: "#333" }));
add(chart, "path", { d: "M1 12.5H918", stroke: "#3d3d3d", "stroke-dasharray": "4 3" });
slots.forEach(([slot, total, parts, cap]) => {
    const x = 0.4 + slot * 5.595;
    let y = 97;
    const seg = (type, h) => {
        y -= h;
        // darker edge to the right of each bar
        add(chart, "rect", { x: x, y: y, width: 5.5, height: h, fill: colors[type], "fill-opacity": 0.4 });
        add(chart, "rect", { x: x, y: y, width: 4.4, height: h > 3 ? h - 0.5 : h, fill: colors[type] });
    };
    for (const type in parts || {}) seg(type, parts[type]);
    if (97 - y < total) seg("code", total - (97 - y));
    if (cap) add(chart, "rect", { x: x, y: 97 - total - 2, width: 4.4, height: 1, fill: "#bbb" });
});
add(chart, "path", { d: "M.5 97.5V.5H918.5V97.5Z", fill: "none", stroke: "#4a4a4d" });

// event rows
const disk = [
    ["pf", 688.5, "0.22 ms", "46 KB"], ["sys", 689, "0.1 ms", "4 KB"], ["json::$EA", 689.7, "0.16 ms", "1 KB"], ["json::$EA", 690, "0.1 ms", "1 KB"],
    ["json::$EA", 690.3, "0.16 ms", "1 KB"], ["json::$EA", 691, "0.17 ms", "1 KB"], ["json::$EA", 691.3, "0.1 ms", "1 KB"], ["json::$EA", 692, "0.11 ms", "1 KB"],
    ["dll", 692.7, "30.16 ms", "520 KB"], ["dll", 694, "3.06 ms", "104 KB"], ["dll", 694, "0.52 ms", "60 KB"]
];
document.getElementById("events-report").innerHTML =
    '<div class="event"><div class="name plain">Application Startup</div><div class="when" style="padding-left:6px"><i class="bracket"></i>2.99 s</div></div>' +
    disk.map(([file, x, time, size]) => `<div class="event"><div class="name">Disk (${file})</div><div class="when" style="padding-left:${(x - 647).toFixed(1)}px"><i class="mark io"></i>${time}<em>[${size}]</em></div></div>`).join("");

const L = "layout", C = "code", R = "render";
const rows = [
    [1, "arrow", C, 1272, "0.16 ms"], [0, "Render", R, 1272, "0.27 ms"],
    [0, "Layout (2)", L, 1274.5, "0.27 ms (0.15 ms)", 1], [1, "circle", C, 1274.5, "0.028 ms"], [1, "arrow", C, 1274.5, "0.083 ms"], [0, "Render", R, 1274.5, "0.14 ms"],
    [0, "Layout (2)", L, 1275.5, "0.25 ms (0.14 ms)", 1], [1, "circle", C, 1275.5, "0.028 ms"], [1, "arrow", C, 1275.5, "0.088 ms"], [0, "Render", R, 1275.5, "0.14 ms"],
    [0, "Layout (2)", L, 1304.5, "0.31 ms (0.23 ms)", 1], [1, "border (1)", C, 1304.5, "0.085 ms (0.083 ms)", 1], [2, "contentPresenter", C, 1304.5, "0.0019 ms"], [0, "Render", R, 1304.5, "0.17 ms"],
    [0, "Layout (2)", L, 1305.5, "0.4 ms (0.21 ms)", 1], [1, "border (1)", C, 1305.5, "0.19 ms (0.19 ms)", 1], [2, "contentPresenter", C, 1305.5, "0.002 ms"], [0, "Render", R, 1305.5, "0.49 ms"],
    [0, "Layout (2)", L, 1334, "0.44 ms (0.18 ms)", 1], [1, "border (1)", C, 1334, "0.25 ms (0.25 ms)", 1], [2, "contentPresenter", C, 1334, "0.0018 ms"], [0, "Render", R, 1334, "0.13 ms"],
    [0, "Layout (2)", L, 1342.5, "0.19 ms (0.14 ms)", 1], [1, "border (1)", C, 1342.5, "0.057 ms (0.055 ms)", 1, "selected"], [2, "contentPresenter", C, 1342.5, "0.002 ms"], [0, "Render", R, 1342.5, "0.12 ms"],
    [0, "Layout (2)", L, 1345, "0.3 ms (0.18 ms)", 1], [1, "border (1)", C, 1345, "0.12 ms (0.12 ms)", 1], [2, "contentPresenter", C, 1345, "0.0035 ms"], [0, "Render", R, 1345, "0.41 ms"],
    [0, "Layout (2)", L, 1356.5, "0.65 ms (0.59 ms)", 2], [0, "Render", R, 1356.5, "0.13 ms"]
];
document.getElementById("events-details").innerHTML = rows.map(([level, name, type, x, time, twist, state]) => {
    const icon = twist ? `<use href="#${twist === 1 ? "i-open" : "i-shut"}" />` : "";
    return `<div class="event level-${level} ${state || ""}"><div class="name"><svg class="twist">${icon}</svg>${name}</div><div class="when" style="padding-left:${x - 1059}px"><i class="mark ${type}"></i>${time}</div></div>`;
}).join("");
```
